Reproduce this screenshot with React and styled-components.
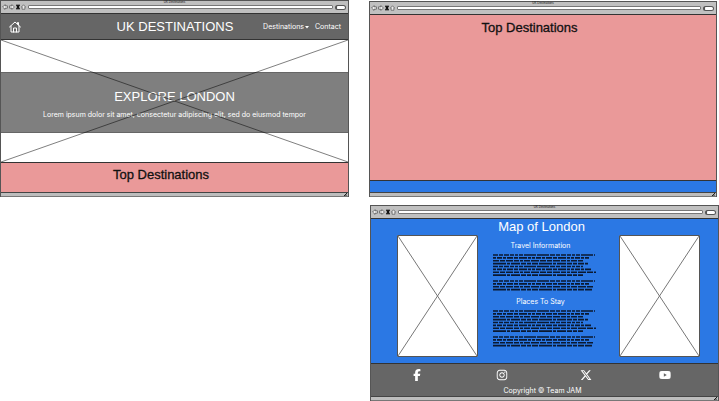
import React from "react";
import styled, { createGlobalStyle } from "styled-components";
import { FaFacebookF, FaInstagram, FaXTwitter, FaYoutube } from "react-icons/fa6";

const GlobalStyle = createGlobalStyle`
  *, *::before, *::after { box-sizing: border-box; }
  body { margin: 0; background: #fff; font-family: Inter, "Liberation Sans", sans-serif; }
  h1, h2, h3, p { margin: 0; font-weight: 400; }
  button, input { font: inherit; color: inherit; padding: 0; margin: 0; border: 0; background: none; }
  a { color: inherit; text-decoration: none; }
  svg { display: block; }
`;

const Board = styled.main`
  display: grid;
  grid-template-columns: 349fr 350fr;
  column-gap: 20px;
  align-items: start;
`;

const Column = styled.div`
  display: flex;
  flex-direction: column;
  gap: 8px;
  padding-top: ${(p) => p.$top || 0}px;
`;

const Frame = styled.section`
  margin-left: ${(p) => p.$left || 0}px;
  margin-right: ${(p) => p.$right || 0}px;
  border: 1px solid #555;
  border-bottom: 0;
`;

const Chrome = styled.header`
  height: 13px;
  background: #c0c0c0;
  border-bottom: 1px solid #333;
`;

const WindowTitle = styled.div`
  height: 3px;
  font: 3px/3px "Liberation Sans", sans-serif;
  color: #111;
  text-align: center;
`;

const ChromeRow = styled.div`
  display: flex;
  align-items: center;
  gap: 1px;
  height: 6px;
  padding: 0 2px 0 1px;
`;

const ChromeButton = styled.button`
  display: block;
  width: ${(p) => p.$width || 6}px;
  height: 6px;
  color: #333;

  svg { width: 100%; height: 100%; }
`;

const Address = styled.input`
  flex: 1;
  min-width: 0;
  height: 4px;
  margin: 0 1px;
  background: #fff;
  border: 1px solid #777;
  border-radius: 1px;
  font-size: 2px;
`;

const SearchPill = styled.button`
  width: 11px;
  height: 5px;
  background: #fff;
  border: 1px solid #555;
  border-left-width: 2px;
  border-radius: 3px;
`;

const StatusBar = styled.div`
  display: flex;
  justify-content: flex-end;
  align-items: center;
  height: 5px;
  padding-right: 1px;
  background: #bdbdbd;
  border-top: 1px solid #444;
  border-bottom: 1px solid #777;

  svg { width: 3px; height: 3px; }
`;

const NavBar = styled.nav`
  display: grid;
  grid-template-columns: 1fr auto 1fr;
  align-items: center;
  height: 26px;
  padding: 0 7px 0 8px;
  background: #666;
  border-bottom: 1px solid #333;
  color: #fff;
`;

const HomeLink = styled.a`
  width: 12px;

  svg { width: 12px; height: 12px; }
`;

const Heading = styled.h2`
  font: 13px/16px "Liberation Sans", sans-serif;
  text-align: center;
  white-space: nowrap;
  color: ${(p) => (p.$dark ? "#111" : "#fff")};
  -webkit-text-stroke: ${(p) => (p.$dark ? "0.3px #111" : "0")};
`;

const NavLinks = styled.div`
  display: flex;
  justify-content: flex-end;
  gap: 6px;
  font-size: 7px;
  line-height: 10px;
`;

const MenuButton = styled.button`
  display: flex;
  align-items: center;
  gap: 1px;

  svg { width: 4px; height: 4px; }
`;

const Hero = styled.div`
  position: relative;
  padding: 32px 0 29px;
  background: #fff;
`;

const HeroBand = styled.div`
  padding: 16px 8px 12px;
  background: #7f7f7f;
  border-top: 1px solid #666;
  border-bottom: 1px solid #666;
  color: #fff;
  text-align: center;
`;

const HeroText = styled.p`
  margin-top: 5px;
  font-size: 7px;
  line-height: 10px;
`;

const HeroCross = styled.div`
  position: absolute;
  inset: 0;
  pointer-events: none;

  svg { width: 100%; height: 100%; }
`;

const PinkBlock = styled.div`
  height: ${(p) => p.$height}px;
  padding: 4px 27px 0 0;
  background: #ea9999;
  border-top: 1px solid ${(p) => (p.$flush ? "#ea9999" : "#333")};
`;

const BlueStrip = styled.div`
  height: 12px;
  background: #2b78e4;
  border-top: 1px solid #333;
`;

const MapBlock = styled.div`
  display: grid;
  grid-template-columns: 81fr 141fr 81fr;
  padding: 0 18px 6px 26px;
  background: #2b78e4;
`;

const ImageBox = styled.div`
  height: 122px;
  margin-top: 16px;
  background: #fff;
  border: 1px solid #555;
  border-radius: 1px;

  svg { width: 100%; height: 100%; }
`;

const Copy = styled.div`
  padding: 0 14px;
  color: #fff;
`;

const MapTitle = styled.h2`
  padding-right: 14px;
  font: 13px/16px "Liberation Sans", sans-serif;
  text-align: center;
  white-space: nowrap;
`;

const SubTitle = styled.h3`
  padding-top: ${(p) => p.$top}px;
  padding-right: 16px;
  font-size: 7px;
  line-height: 10px;
  text-align: center;
`;

const Scribble = styled.svg`
  width: 104px;
  height: 37px;
  margin-top: 3px;
`;

const Footer = styled.footer`
  padding-top: 5px;
  background: #666;
  border-top: 1px solid #333;
  color: #fff;
`;

const Social = styled.div`
  display: grid;
  grid-template-columns: 84fr 85fr 84fr 74fr;
  justify-items: center;
  align-items: center;
  height: 12px;
  padding: 0 16px 0 4px;
`;

const SocialLink = styled.a`
  font-size: ${(p) => p.$size}px;
`;

const Copyright = styled.p`
  padding: 4px 4px 0 0;
  font-size: 7px;
  line-height: 11px;
  text-align: center;
`;

function BrowserFrame({ children, left, right }) {
  return (
    <Frame $left={left} $right={right}>
      <Chrome>
        <WindowTitle>UK Destinations</WindowTitle>
        <ChromeRow>
          <ChromeButton aria-label="Back">
            <svg viewBox="0 0 10 10" fill="#eee" stroke="currentColor"><path d="M1 5l4-4v2h4v4H5v2z" /></svg>
          </ChromeButton>
          <ChromeButton aria-label="Forward">
            <svg viewBox="0 0 10 10" fill="#eee" stroke="currentColor"><path d="M9 5L5 1v2H1v4h4v2z" /></svg>
          </ChromeButton>
          <ChromeButton aria-label="Stop" $width={4}>
            <svg viewBox="0 0 7 10" stroke="#111" strokeWidth="2.6"><path d="M1 1l5 8M6 1L1 9" /></svg>
          </ChromeButton>
          <ChromeButton aria-label="Home page" $width={5}>
            <svg viewBox="0 0 9 10" fill="#eee" stroke="currentColor"><path d="M1 5l3.500-4L8 5H7v4H2V5z" /></svg>
          </ChromeButton>
          <Address aria-label="Address" />
          <SearchPill aria-label="Search" />
        </ChromeRow>
      </Chrome>
      {children}
      <StatusBar>
        <svg viewBox="0 0 6 6" stroke="#222" strokeWidth="2"><path d="M0 6L6 0M3 6l3-3" /></svg>
      </StatusBar>
    </Frame>
  );
}

function Cross({ color }) {
  return (
    <svg viewBox="0 0 100 100" preserveAspectRatio="none" stroke={color} strokeWidth="1">
      <path d="M0 0L100 100M100 0L0 100" vectorEffect="non-scaling-stroke" />
    </svg>
  );
}

const FIRST = [102, 96, 90, 95, 90, 99, 103, 90];
const SECOND = [102, 96, 101, 99];
const DASHES = [
  "5 1 4 1 5 1 4 1 3 1 4 1 12 1 12 1",
  "3 1 5 1 3 1 6 1 4 1 8 1 3 1",
  "6 1 5 1 7 1 5 1 3 1 6 1 8 1",
  "13 1 3 1 9 1 5 1 4 1 6 1",
];

function TextLines() {
  const rows = [
    ...FIRST.map((w, i) => [w, 1 + i * 2.87]),
    ...SECOND.map((w, i) => [w, 27 + i * 2.87]),
  ];
  return (
    <Scribble viewBox="0 0 104 37" stroke="#0b1930" strokeWidth="1.6" aria-hidden="true">
      {rows.map(([w, y], i) => (
        <path key={i} d={`M1 ${y}H${w + 1}`} strokeDasharray={DASHES[i % 4]} />
      ))}
    </Scribble>
  );
}

export default function App() {
  return (
    <>
      <GlobalStyle />
      <Board>
        <Column>
          <BrowserFrame>
            <NavBar>
              <HomeLink href="#home" aria-label="Home">
                <svg viewBox="0 0 24 24" fill="none" stroke="#fff" strokeWidth="2" strokeLinejoin="round" strokeLinecap="round">
                  <path d="M1 12L12 2l11 10M4 10v12h16V10M17 6V3h2v5M9 22v-8h6v8" />
                </svg>
              </HomeLink>
              <Heading as="h1">UK DESTINATIONS</Heading>
              <NavLinks>
                <MenuButton>
                  Destinations
                  <svg viewBox="0 0 8 8" fill="currentColor"><path d="M0 2h8L4 7z" /></svg>
                </MenuButton>
                <a href="#contact">Contact</a>
              </NavLinks>
            </NavBar>
            <Hero>
              <HeroBand>
                <Heading>EXPLORE LONDON</Heading>
                <HeroText>Lorem ipsum dolor sit amet, consectetur adipiscing elit, sed do eiusmod tempor</HeroText>
              </HeroBand>
              <HeroCross><Cross color="rgba(0,0,0,0.5)" /></HeroCross>
            </Hero>
            <PinkBlock $height={30}>
              <Heading $dark>Top Destinations</Heading>
            </PinkBlock>
          </BrowserFrame>
        </Column>
        <Column $top={1}>
          <BrowserFrame right={2}>
            <PinkBlock $height={165} $flush>
              <Heading $dark>Top Destinations</Heading>
            </PinkBlock>
            <BlueStrip />
          </BrowserFrame>
          <BrowserFrame left={1}>
            <MapBlock>
              <ImageBox><Cross color="#777" /></ImageBox>
              <Copy>
                <MapTitle>Map of London</MapTitle>
                <SubTitle $top={6}>Travel Information</SubTitle>
                <TextLines />
                <SubTitle $top={6}>Places To Stay</SubTitle>
                <TextLines />
              </Copy>
              <ImageBox><Cross color="#777" /></ImageBox>
            </MapBlock>
            <Footer>
              <Social>
                <SocialLink href="#facebook" aria-label="Facebook" $size={12}><FaFacebookF /></SocialLink>
                <SocialLink href="#instagram" aria-label="Instagram" $size={12}><FaInstagram /></SocialLink>
                <SocialLink href="#x" aria-label="X" $size={12}><FaXTwitter /></SocialLink>
                <SocialLink href="#youtube" aria-label="YouTube" $size={12}><FaYoutube /></SocialLink>
              </Social>
              <Copyright>Copyright © Team JAM</Copyright>
            </Footer>
          </BrowserFrame>
        </Column>
      </Board>
    </>
  );
}
